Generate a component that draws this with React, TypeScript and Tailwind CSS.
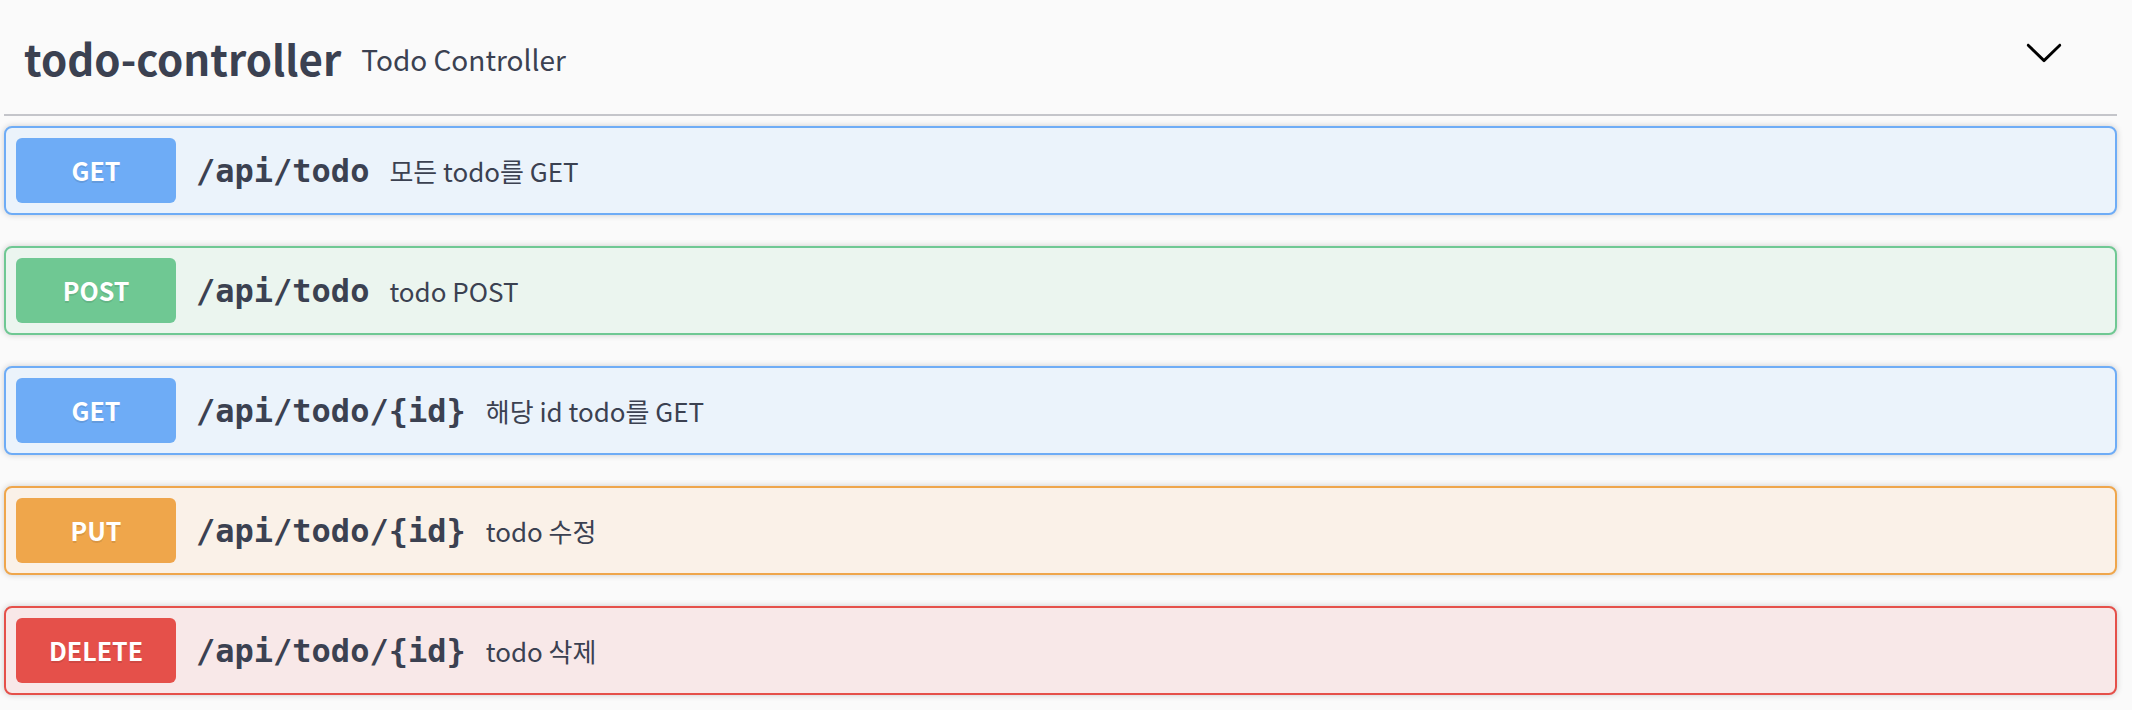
import React from "react";

interface Operation {
  method: string;
  path: string;
  summary: string;
  card: string;
  badge: string;
}

const operations: Operation[] = [
  {
    method: "GET",
    path: "/api/todo",
    summary: "모든 todo를 GET",
    card: "bg-[#ebf3fb] border-[#6eacf6]",
    badge: "bg-[#6eacf6]",
  },
  {
    method: "POST",
    path: "/api/todo",
    summary: "todo POST",
    card: "bg-[#ebf5ef] border-[#6fc893]",
    badge: "bg-[#6fc893]",
  },
  {
    method: "GET",
    path: "/api/todo/{id}",
    summary: "해당 id todo를 GET",
    card: "bg-[#ebf3fb] border-[#6eacf6]",
    badge: "bg-[#6eacf6]",
  },
  {
    method: "PUT",
    path: "/api/todo/{id}",
    summary: "todo 수정",
    card: "bg-[#faf1e8] border-[#efa64b]",
    badge: "bg-[#efa64b]",
  },
  {
    method: "DELETE",
    path: "/api/todo/{id}",
    summary: "todo 삭제",
    card: "bg-[#f8e8e8] border-[#e5504a]",
    badge: "bg-[#e5504a]",
  },
];

const sans = "font-['Noto_Sans_CJK_KR',sans-serif]";

const OperationRow: React.FC<{ op: Operation }> = ({ op }) => {
  return (
    <div
      className={`flex items-center h-[89px] px-[10px] border-2 rounded-[8px] shadow-[0_0_6px_rgba(0,0,0,0.19)] ${op.card}`}
    >
      <div
        className={`w-[160px] h-[65px] flex items-center justify-center rounded-[6px] text-white text-[25px] font-bold text-shadow-[0_2px_0_rgba(0,0,0,0.1)] ${sans} ${op.badge}`}
      >
        {op.method}
      </div>
      <span className="px-[20px] text-[32px] font-bold text-[#3b4151] font-['DejaVu_Sans_Mono',monospace]">
        {op.path}
      </span>
      <span className={`text-[26px] text-[#3b4151] ${sans}`}>{op.summary}</span>
    </div>
  );
};

export default function App() {
  return (
    <div className="min-h-[710px] bg-[#fafafa] pl-[4px] pr-[15px]">
      {/* tag header */}
      <div className="flex items-center h-[116px] pl-[20px] pr-[53px] border-b-2 border-[#c4c5ca] mb-[10px]">
        <h4 className={`text-[42px] font-bold text-[#3b4151] ${sans}`}>todo-controller</h4>
        <span className={`flex-1 px-[20px] pt-[4px] text-[28px] text-[#3b4151] ${sans}`}>
          Todo Controller
        </span>
        <svg width="40" height="40" viewBox="0 0 20 20" className="mb-[10px]">
          <path
            d="M17.418 6.109c.272-.268.709-.268.979 0s.271.701 0 .969l-7.908 7.83c-.27.268-.707.268-.979 0l-7.908-7.83c-.27-.268-.27-.701 0-.969.271-.268.709-.268.979 0L10 13.25l7.418-7.141z"
            fill="#000"
          />
        </svg>
      </div>
      <div className="flex flex-col gap-[31px]">
        {operations.map((op, i) => (
          <OperationRow key={i} op={op} />
        ))}
      </div>
    </div>
  );
}
